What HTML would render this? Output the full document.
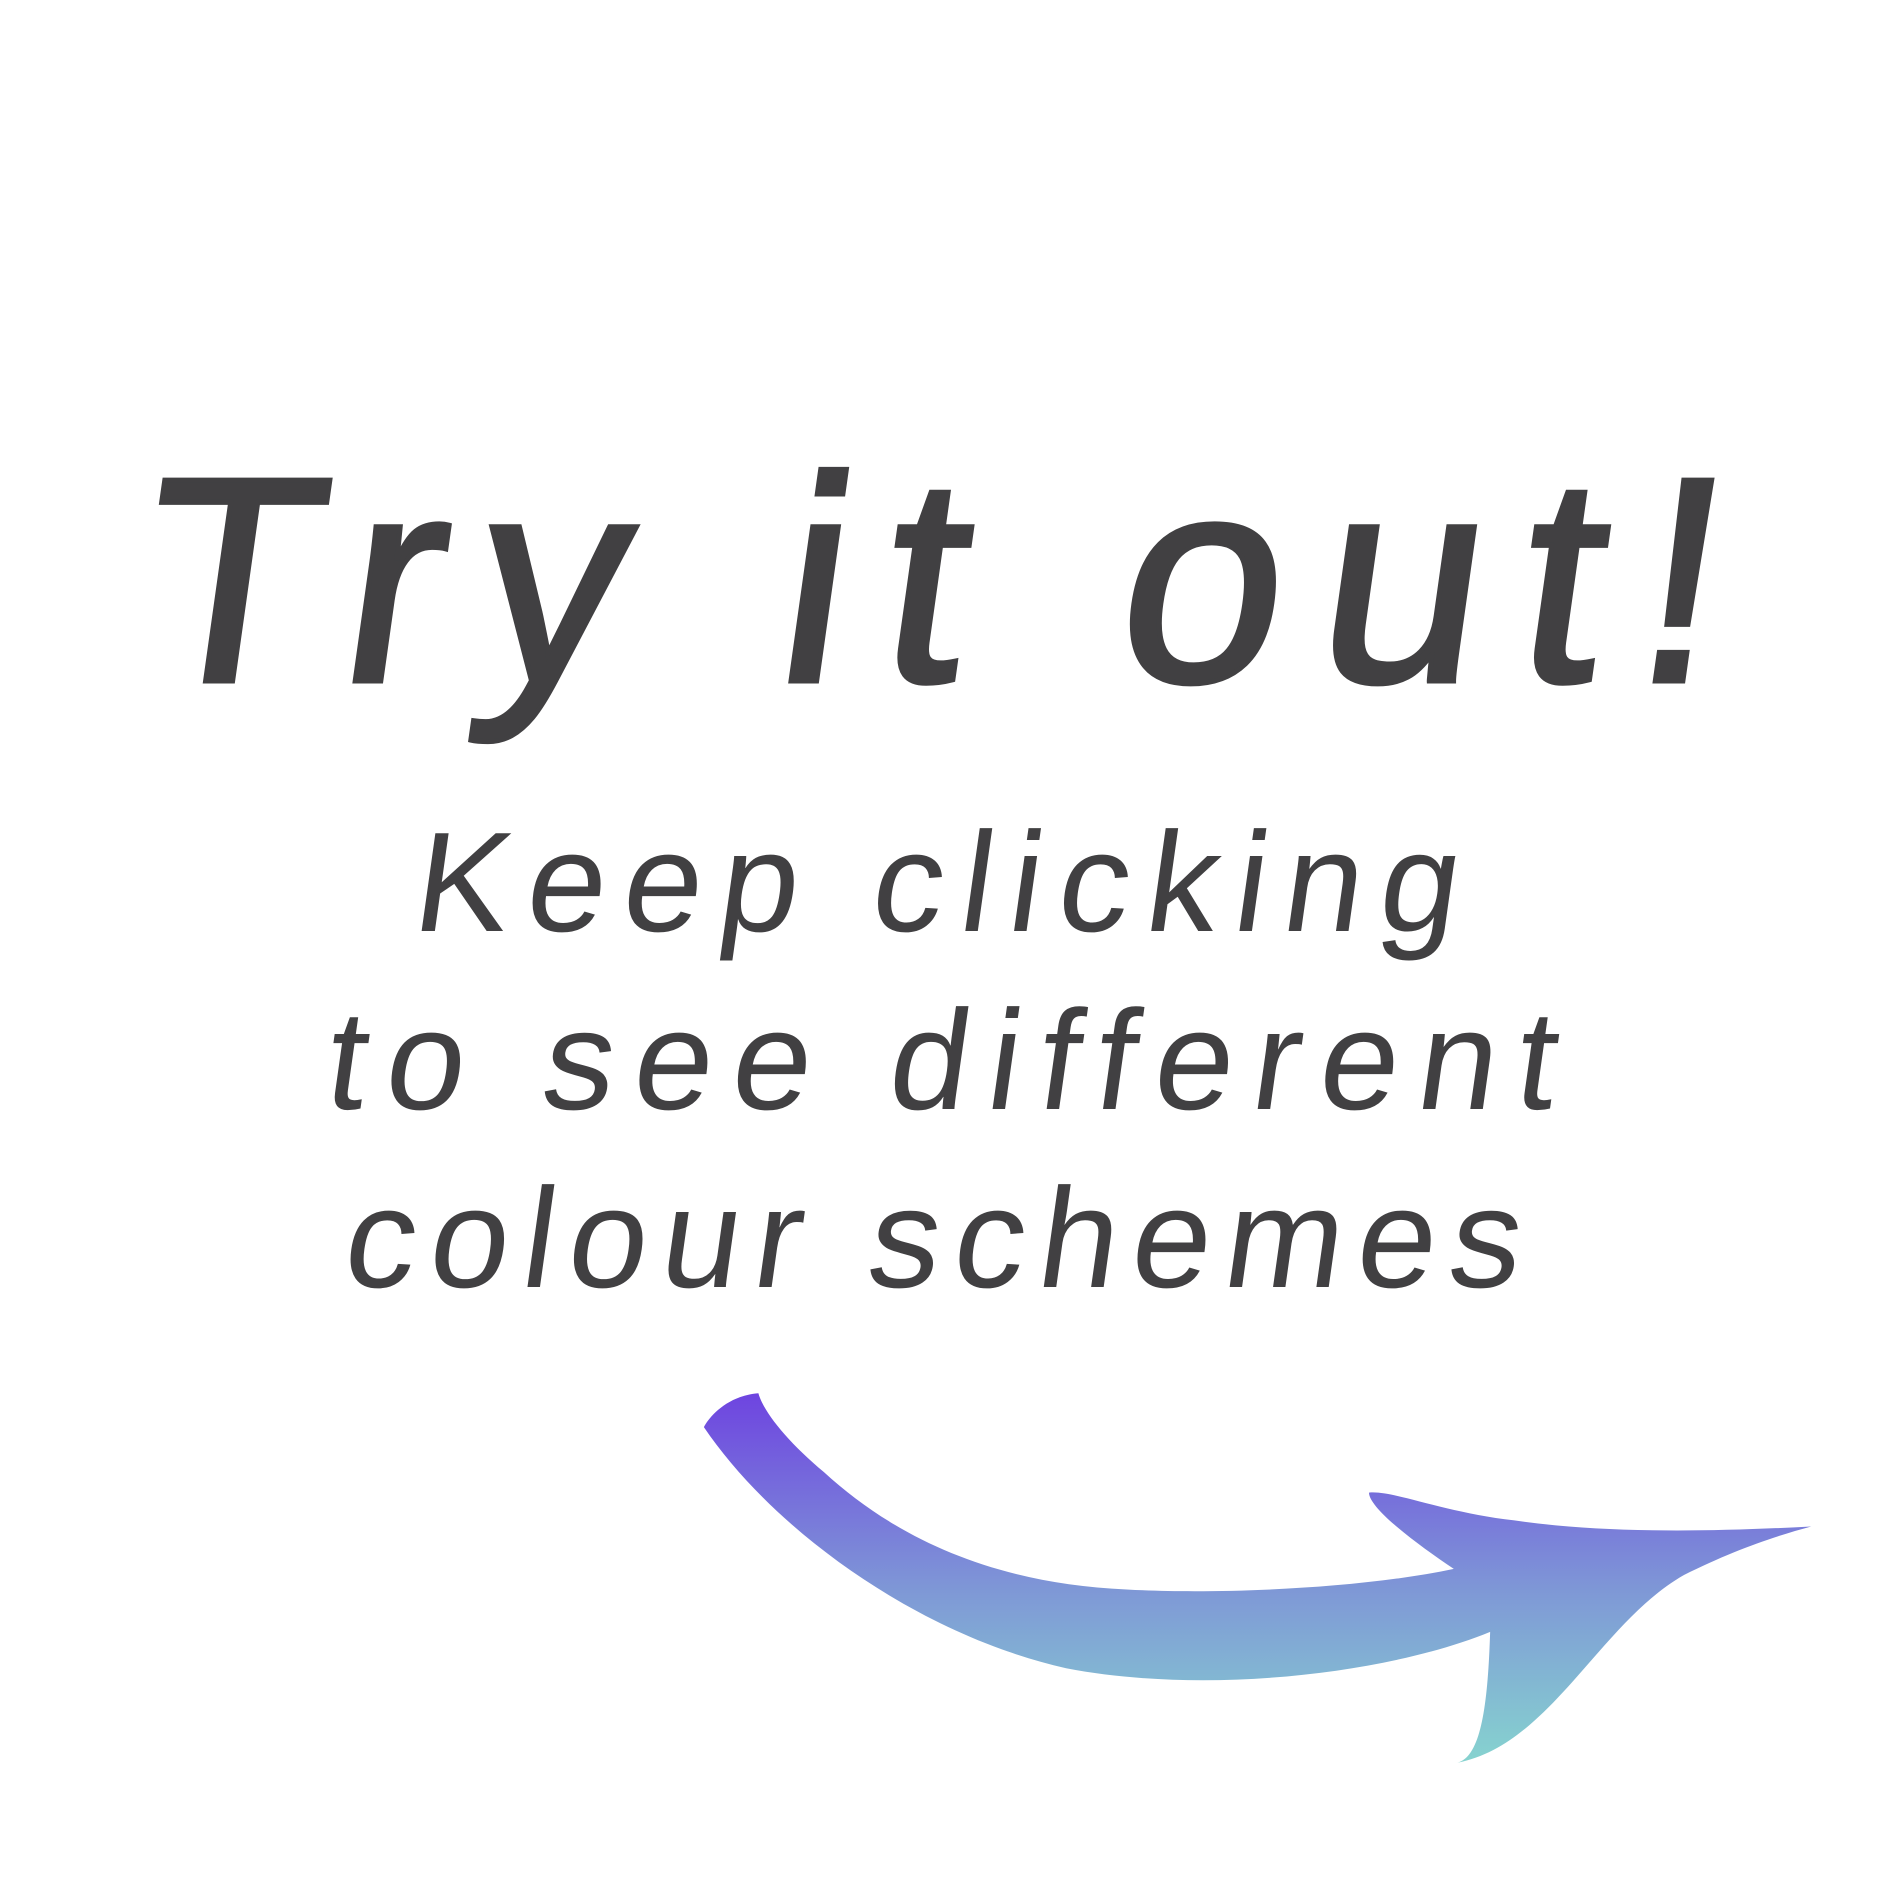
<!DOCTYPE html>
<html><head><meta charset="utf-8"><style>
html,body{margin:0;padding:0;background:#fff;}
svg{display:block}
text{font-family:"Liberation Sans",sans-serif;fill:#414042;}
</style></head><body>
<svg width="1890" height="1890" viewBox="0 0 1890 1890" xmlns="http://www.w3.org/2000/svg">
<defs>
<linearGradient id="g" x1="0" y1="1150" x2="0" y2="1455" gradientUnits="userSpaceOnUse">
<stop offset="0" stop-color="#6e44e0"/>
<stop offset="0.55" stop-color="#7f9ad6"/>
<stop offset="1" stop-color="#86d3cf"/>
</linearGradient>
</defs>
<g transform="translate(0,681) skewX(-8)">
<text x="130" y="0" font-size="292" stroke="#414042" stroke-width="5" textLength="1580" lengthAdjust="spacing">Try it out!</text>
</g>
<g transform="translate(0,931) skewX(-8)">
<text x="410" y="0" font-size="142" textLength="1044" lengthAdjust="spacing">Keep clicking</text>
</g>
<g transform="translate(0,1109) skewX(-8)">
<text x="322" y="0" font-size="142" textLength="1229" lengthAdjust="spacing">to see different</text>
</g>
<g transform="translate(0,1287) skewX(-8)">
<text x="340" y="0" font-size="142" textLength="1176" lengthAdjust="spacing">colour schemes</text>
</g>
<g transform="scale(1.2115)">
<path fill="url(#g)" d="M626,1150 C600,1152 585,1170 581,1178 C640,1265 760,1350 880,1377 C1000,1400 1150,1380 1230,1347 C1228,1410 1222,1450 1203,1455 C1280,1440 1320,1340 1390,1300 C1430,1280 1465,1268 1495,1260 C1400,1265 1320,1265 1250,1255 C1190,1248 1150,1230 1130,1232 C1130,1245 1170,1275 1200,1295 C1120,1312 1000,1316 930,1312 C820,1307 740,1270 680,1215 C650,1190 630,1165 626,1150 Z"/>
</g>
</svg>
</body></html>
